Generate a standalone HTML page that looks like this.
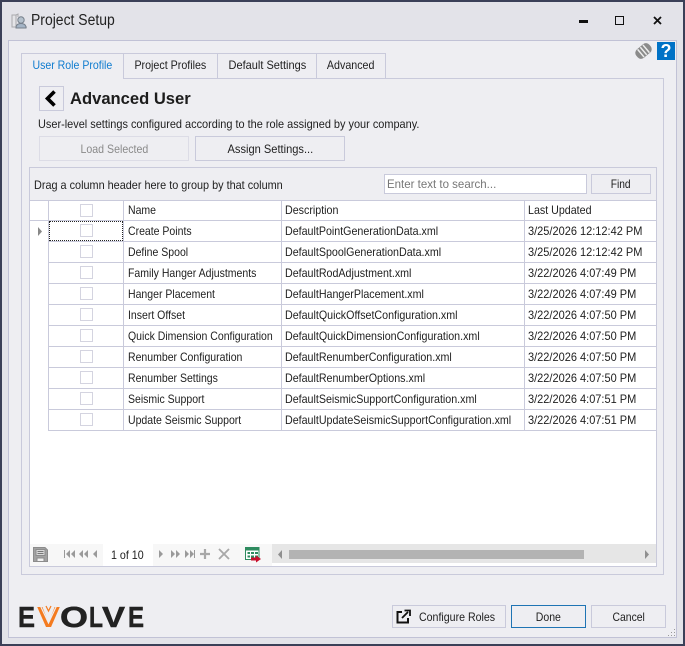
<!DOCTYPE html>
<html><head><meta charset="utf-8"><title>Project Setup</title>
<style>
html,body{margin:0;padding:0;background:#e3e3e9}
#w{position:relative;width:685px;height:646px;overflow:hidden;background:#e3e3e9;font:12px "Liberation Sans",sans-serif;color:#1e1e1e}
#w div,#w svg{position:absolute;box-sizing:border-box}
.t{white-space:nowrap;line-height:16px;height:16px;transform-origin:left center}
.b{background:#eeeef2;border:1px solid #c9cadb;text-align:center;line-height:22px;white-space:nowrap}
.tab{top:53px;height:26px;background:#eeeef2;border:1px solid #c9cadb;text-align:center;line-height:23px;white-space:nowrap}
.b span,.tab span{display:inline-block}
.h{background:#c9cadb}
.cb{left:80px;width:13px;height:13px;background:#fff;border:1px solid #d4d4e0}
.c{white-space:nowrap;line-height:16px;height:16px;transform-origin:left center}
.n{left:128px;transform:scaleX(.875)}
.d{left:285px;transform:scaleX(.89)}
.u{left:528px;transform:scaleX(.917)}
</style></head><body><div id="w">
<div style="left:0;top:0;width:685px;height:646px;border:2px solid #3b4058"></div>
<svg style="left:11px;top:13px" width="17" height="17" viewBox="0 0 17 17"><path d="M1 2h4v12H1z" fill="#e4e4e8" stroke="#a9a9ad"/><path d="M5 2l2-1v3M5 14h11" fill="none" stroke="#a9a9ad"/><circle cx="10" cy="7" r="3.2" fill="#b4c0cc" stroke="#77808c"/><path d="M5 15c0-3 2-4.500 5-4.500s5 1.500 5 4.500z" fill="#a4b4c6" stroke="#77808c"/></svg>
<div class="t" style="left:31px;top:13px;font-size:15.500px;transform:scaleX(.9);color:#222">Project Setup</div>
<div style="left:579px;top:20px;width:9px;height:3px;background:#111"></div>
<div style="left:615px;top:16px;width:9px;height:9px;border:1.500px solid #111"></div>
<svg style="left:652px;top:15px" width="12" height="11" viewBox="0 0 12 11"><path d="M2 2l7 7M9 2l-7 7" stroke="#111" stroke-width="1.800" fill="none"/></svg>

<div style="left:8px;top:40px;width:669px;height:598px;background:#eeeef2;border:1px solid #c1c2d6"></div>
<div style="left:21px;top:78px;width:643px;height:497px;background:#eeeef2;border:1px solid #c9cadb"></div>
<div class="tab" style="left:21px;width:103px;color:#0f7ccf;border-bottom:0;z-index:2"><span style="transform:scaleX(.88)">User Role Profile</span></div>
<div class="tab" style="left:123px;width:95px"><span style="transform:scaleX(.89)">Project Profiles</span></div>
<div class="tab" style="left:217px;width:100px"><span style="transform:scaleX(.917)">Default Settings</span></div>
<div class="tab" style="left:316px;width:70px"><span style="transform:scaleX(.89)">Advanced</span></div>

<svg style="left:634px;top:42px" width="19" height="18" viewBox="0 0 19 18"><g transform="rotate(-40 9.500 9)"><rect x="1" y="3.500" width="17" height="11" rx="4.500" fill="#8b8b8b"/><path d="M6 4v10M9.500 4v10M13 4v10" stroke="#eee" stroke-width="1.500"/></g></svg>
<div style="left:657px;top:42px;width:18px;height:18px;background:#0072c6;color:#fff;font:bold 18px/18px 'Liberation Sans',sans-serif;text-align:center">?</div>

<div style="left:39px;top:86px;width:25px;height:25px;border:1px solid #c9cadb"></div>
<svg style="left:44px;top:90px" width="14" height="17" viewBox="0 0 14 17"><path d="M10.500 1.500L3.500 8.500l7 7" fill="none" stroke="#000" stroke-width="3.600"/></svg>
<div class="t" style="left:70px;top:89px;font-size:17px;transform:scaleX(.975);font-weight:bold;line-height:20px;height:20px;color:#1c1c1c">Advanced User</div>
<div class="t" style="left:38px;top:116px;transform:scaleX(.911)">User-level settings configured according to the role assigned by your company.</div>

<div class="b" style="left:39px;top:136px;width:150px;height:25px;line-height:24px;color:#8a8a8a;border-color:#dcdce6"><span style="transform:scaleX(.883)">Load Selected</span></div>
<div class="b" style="left:195px;top:136px;width:150px;height:25px;line-height:24px"><span style="transform:scaleX(.924)">Assign Settings...</span></div>

<div style="left:29px;top:167px;width:628px;height:400px;background:#fff;border:1px solid #c9cadb"></div>
<div style="left:30px;top:168px;width:626px;height:33px;background:#eeeef2;border-bottom:1px solid #c9cadb"></div>
<div class="t" style="left:34px;top:177px;transform:scaleX(.905)">Drag a column header here to group by that column</div>
<div style="left:384px;top:174px;width:203px;height:20px;background:#fff;border:1px solid #c9cadb"></div>
<div class="t" style="left:387px;top:176px;color:#777;transform:scaleX(.958)">Enter text to search...</div>
<div class="b" style="left:591px;top:174px;width:60px;height:20px;line-height:19px"><span style="transform:scaleX(.85)">Find</span></div>

<div class="h" style="left:48px;top:201px;width:1px;height:230px"></div>
<div class="h" style="left:123px;top:201px;width:1px;height:230px"></div>
<div class="h" style="left:281px;top:201px;width:1px;height:230px"></div>
<div class="h" style="left:524px;top:201px;width:1px;height:230px"></div>
<div class="h" style="left:30px;top:220px;width:626px;height:1px"></div>
<div class="h" style="left:48px;top:241px;width:608px;height:1px"></div>
<div class="h" style="left:48px;top:262px;width:608px;height:1px"></div>
<div class="h" style="left:48px;top:283px;width:608px;height:1px"></div>
<div class="h" style="left:48px;top:304px;width:608px;height:1px"></div>
<div class="h" style="left:48px;top:325px;width:608px;height:1px"></div>
<div class="h" style="left:48px;top:346px;width:608px;height:1px"></div>
<div class="h" style="left:48px;top:367px;width:608px;height:1px"></div>
<div class="h" style="left:48px;top:388px;width:608px;height:1px"></div>
<div class="h" style="left:48px;top:409px;width:608px;height:1px"></div>
<div class="h" style="left:48px;top:430px;width:608px;height:1px"></div>

<div style="left:49px;top:221px;width:74px;height:20px;border:1px dotted #222"></div>
<svg style="left:37px;top:227px" width="6" height="9"><path d="M1 0l4 4.500-4 4.500z" fill="#888"/></svg>

<div class="cb" style="top:204px"></div>
<div class="c n" style="top:202px">Name</div><div class="c d" style="top:202px">Description</div><div class="c u" style="top:202px;transform:scaleX(.89)">Last Updated</div>

<div class="cb" style="top:224px"></div><div class="c n" style="top:223px">Create Points</div><div class="c d" style="top:223px">DefaultPointGenerationData.xml</div><div class="c u" style="top:223px">3/25/2026 12:12:42 PM</div>
<div class="cb" style="top:245px"></div><div class="c n" style="top:244px">Define Spool</div><div class="c d" style="top:244px">DefaultSpoolGenerationData.xml</div><div class="c u" style="top:244px">3/25/2026 12:12:42 PM</div>
<div class="cb" style="top:266px"></div><div class="c n" style="top:265px">Family Hanger Adjustments</div><div class="c d" style="top:265px">DefaultRodAdjustment.xml</div><div class="c u" style="top:265px">3/22/2026 4:07:49 PM</div>
<div class="cb" style="top:287px"></div><div class="c n" style="top:286px">Hanger Placement</div><div class="c d" style="top:286px">DefaultHangerPlacement.xml</div><div class="c u" style="top:286px">3/22/2026 4:07:49 PM</div>
<div class="cb" style="top:308px"></div><div class="c n" style="top:307px">Insert Offset</div><div class="c d" style="top:307px">DefaultQuickOffsetConfiguration.xml</div><div class="c u" style="top:307px">3/22/2026 4:07:50 PM</div>
<div class="cb" style="top:329px"></div><div class="c n" style="top:328px">Quick Dimension Configuration</div><div class="c d" style="top:328px">DefaultQuickDimensionConfiguration.xml</div><div class="c u" style="top:328px">3/22/2026 4:07:50 PM</div>
<div class="cb" style="top:350px"></div><div class="c n" style="top:349px">Renumber Configuration</div><div class="c d" style="top:349px">DefaultRenumberConfiguration.xml</div><div class="c u" style="top:349px">3/22/2026 4:07:50 PM</div>
<div class="cb" style="top:371px"></div><div class="c n" style="top:370px">Renumber Settings</div><div class="c d" style="top:370px">DefaultRenumberOptions.xml</div><div class="c u" style="top:370px">3/22/2026 4:07:50 PM</div>
<div class="cb" style="top:392px"></div><div class="c n" style="top:391px">Seismic Support</div><div class="c d" style="top:391px">DefaultSeismicSupportConfiguration.xml</div><div class="c u" style="top:391px">3/22/2026 4:07:51 PM</div>
<div class="cb" style="top:413px"></div><div class="c n" style="top:412px">Update Seismic Support</div><div class="c d" style="top:412px">DefaultUpdateSeismicSupportConfiguration.xml</div><div class="c u" style="top:412px">3/22/2026 4:07:51 PM</div>

<div style="left:30px;top:544px;width:242px;height:22px;background:#f7f7f7"></div>
<div style="left:103px;top:544px;width:50px;height:22px;background:#fff"></div>
<div class="t" style="left:111px;top:547px;transform:scaleX(.89)">1 of 10</div>
<svg style="left:33px;top:547px" width="15" height="15" viewBox="0 0 15 15"><path d="M.5.500h11.500l2.500 2.500v11.500H.5z" fill="#a2a2a2" stroke="#8c8c8c"/><path d="M3 2.500h9v6H3z" fill="#d8d8d8" stroke="#8c8c8c"/><path d="M4.500 4.500h6M4.500 6.500h6" stroke="#777" fill="none"/><path d="M4 11h7v3.500H4z" fill="#f2f2f2" stroke="#8c8c8c"/></svg>
<svg style="left:62px;top:549px" width="42" height="10" viewBox="0 0 42 10" fill="#9a9a9a"><path d="M2 1h1v8H2zM8 1L4 5l4 4zM13 1L9 5l4 4z"/><path d="M21 1l-4 4 4 4zM26 1l-4 4 4 4z"/><path d="M35 1l-4 4 4 4z"/></svg>
<svg style="left:158px;top:549px" width="38" height="10" viewBox="0 0 38 10" fill="#9a9a9a"><path d="M1 1l4 4-4 4z"/><path d="M13 1l4 4-4 4zM18 1l4 4-4 4z"/><path d="M27 1l4 4-4 4zM32 1l4 4-4 4zM36 1h1v8h-1z"/></svg>
<svg style="left:199px;top:548px" width="12" height="12"><path d="M6 1v10M1 6h10" stroke="#a8a8a8" stroke-width="2.200"/></svg>
<svg style="left:217px;top:548px" width="14" height="12"><path d="M2 1l10 10M12 1L2 11" stroke="#a8a8a8" stroke-width="1.800"/></svg>
<svg style="left:245px;top:547px" width="17" height="17" viewBox="0 0 17 17"><path d="M.5.500h13.500v12H.5z" fill="#fff" stroke="#2e8b5f"/><path d="M1 1h13v2.500H1z" fill="#2e8b5f"/><path d="M2.500 5h2.500v2H2.500zM6 5h3v2H6zM10 5h3v2h-3zM2.500 8.500h2.500v2H2.500zM6 8.500h3v2H6zM10 8.500h3v2h-3z" fill="#2e8b5f"/><path d="M6 10.500h5V8.500l5 3.500-5 3.500v-2H6z" fill="#c8102e"/></svg>
<div style="left:272px;top:544px;width:384px;height:19px;background:#e6e6e6"></div>
<div style="left:289px;top:550px;width:295px;height:9px;background:#b3b3b3"></div>
<svg style="left:277px;top:550px" width="6" height="9"><path d="M5 0L1 4.500 5 9z" fill="#8f8f8f"/></svg>
<svg style="left:644px;top:550px" width="6" height="9"><path d="M1 0l4 4.500L1 9z" fill="#8f8f8f"/></svg>

<svg style="left:14px;top:600px" width="134" height="32" viewBox="14 600 134 32" font-family="Liberation Sans" font-weight="bold" font-size="29" fill="#222" stroke="#222" stroke-width=".5">
<text x="18" y="627" textLength="17" lengthAdjust="spacingAndGlyphs">E</text>
<text x="37" y="627" textLength="23" lengthAdjust="spacingAndGlyphs" fill="#f47b20" stroke="none">V</text>
<path d="M40.500 606l8 17 8-17M44.500 606l4 10 4-10" fill="none" stroke="#eeeef2" stroke-width="1.200"/>
<path d="M46 606l2.500 5 2.500-5" fill="none" stroke="#f47b20" stroke-width="1.200"/>
<text x="60" y="627" textLength="28" lengthAdjust="spacingAndGlyphs">O</text>
<text x="89" y="627" textLength="14" lengthAdjust="spacingAndGlyphs">L</text>
<text x="102" y="627" textLength="23" lengthAdjust="spacingAndGlyphs">V</text>
<text x="128" y="627" textLength="16" lengthAdjust="spacingAndGlyphs">E</text>
</svg>

<div class="b" style="left:392px;top:605px;width:114px;height:23px"></div>
<div class="t" style="left:419px;top:609px;transform:scaleX(.884)">Configure Roles</div>
<svg style="left:396px;top:609px" width="15" height="15" viewBox="0 0 15 15"><path d="M6 3H1.500v10.500H12V9" fill="none" stroke="#111" stroke-width="2"/><path d="M6 9l6-6M8.500 1.500h5.500V7" fill="none" stroke="#111" stroke-width="1.800"/></svg>
<div class="b" style="left:511px;top:605px;width:75px;height:23px;border-color:#1f74b4"><span style="transform:scaleX(.875)">Done</span></div>
<div class="b" style="left:591px;top:605px;width:75px;height:23px"><span style="transform:scaleX(.865)">Cancel</span></div>
<svg style="left:667px;top:628px" width="9" height="9" fill="#9a9a9a"><path d="M7 1h1v1H7zM4 4h1v1H4zM7 4h1v1H7zM1 7h1v1H1zM4 7h1v1H4zM7 7h1v1H7z"/></svg>
</div></body></html>
